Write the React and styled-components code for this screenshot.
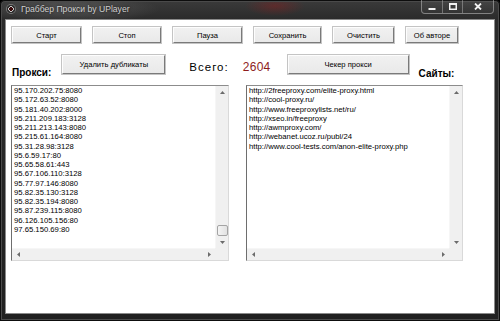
import React from "react";
import styled, { createGlobalStyle } from "styled-components";

const Global = createGlobalStyle`
  html, body { margin: 0; padding: 0; background: #000; }
  body { width: 500px; height: 321px; overflow: hidden; font-family: "Liberation Sans", Arial, sans-serif; }
  #root { width: 500px; height: 321px; }
`;

const Frame = styled.div`
  width: 500px;
  height: 321px;
  box-sizing: border-box;
  display: flex;
  flex-direction: column;
  background:
    radial-gradient(ellipse 90px 14px at 70px 9px, rgba(150,150,150,0.35), transparent),
    radial-gradient(ellipse 30px 10px at 275px 6px, rgba(140,30,30,0.45), transparent),
    linear-gradient(180deg, #3b3b3b 0%, #2b2b2b 6%, #272727 50%, #202020 100%);
  box-shadow: inset 0 0 0 1px #0d0d0d, inset 0 0 0 2px #4a4a4a;
  border-radius: 5px 5px 0 0;
`;

const TitleBar = styled.div`
  height: 20px;
  display: flex;
  align-items: flex-start;
  padding-left: 7px;
  flex-shrink: 0;
`;

const AppIcon = styled.div`
  width: 8px;
  height: 8px;
  margin-top: 5px;
  border-radius: 50%;
  background: radial-gradient(circle at 50% 50%, #3a0a0a 0 30%, #c9c9c9 32% 48%, #2a2a2a 52% 100%);
  box-shadow: 0 0 0 1px #777;
`;

const Title = styled.span`
  margin-left: 6px;
  margin-top: 4px;
  font-size: 8.6px;
  line-height: 11px;
  color: #cfcfcf;
  text-shadow: 0 0 3px rgba(0,0,0,0.8);
  white-space: nowrap;
`;

const CaptionGroup = styled.div`
  margin-left: auto;
  margin-right: 6px;
  height: 14px;
  display: flex;
  box-sizing: border-box;
  border: 1px solid rgba(190,190,190,0.55);
  border-top: none;
  border-radius: 0 0 4px 4px;
  background: linear-gradient(180deg, rgba(255,255,255,0.06), rgba(255,255,255,0.02));
`;

const CaptionBtn = styled.div`
  width: ${p => p.$w}px;
  height: 100%;
  display: flex;
  align-items: center;
  justify-content: center;
  border-left: ${p => (p.$first ? "none" : "1px solid rgba(190,190,190,0.45)")};
  box-sizing: border-box;
`;

const Client = styled.div`
  flex: 1;
  margin: 0 6px 8px 6px;
  background: #fff;
  box-shadow: 0 0 0 1px #8a8a8a;
  padding: 7px 0 0 5px;
  display: flex;
  flex-direction: column;
`;

const Toolbar = styled.div`
  display: flex;
  gap: 12px;
  margin-left: 1px;
  height: 16px;
`;

const Button = styled.div`
  width: ${p => p.$w}px;
  height: ${p => p.$h || 16}px;
  margin-left: ${p => p.$ml || 0}px;
  box-sizing: border-box;
  display: flex;
  align-items: center;
  justify-content: center;
  font-size: 7.6px;
  color: #000;
  white-space: nowrap;
  background: linear-gradient(180deg, #f1f1f1 0%, #e9e9e9 100%);
  border: 1px solid;
  border-color: #fdfdfd #7a7a7a #7a7a7a #fdfdfd;
  box-shadow: 0 0 0 1px #c4c4c4;
`;

const InfoRow = styled.div`
  display: flex;
  align-items: flex-start;
  height: 30px;
  margin-top: 12px;
  margin-left: 1px;
`;

const Label = styled.span`
  margin-top: ${p => p.$top}px;
  margin-left: ${p => p.$left || 0}px;
  font-size: ${p => p.$size || 10}px;
  font-weight: ${p => (p.$bold ? 700 : 400)};
  letter-spacing: ${p => p.$ls || 0}px;
  color: ${p => p.$color || "#000"};
  line-height: 12px;
  white-space: nowrap;
`;

const Lists = styled.div`
  display: flex;
  gap: 17px;
  height: 176px;
`;

const ListBox = styled.div`
  width: ${p => p.$w}px;
  height: 100%;
  box-sizing: border-box;
  display: grid;
  grid-template-columns: 1fr 13px;
  grid-template-rows: 1fr 12px;
  border: 1px solid;
  border-color: #8c8c8c #d9d9d9 #d9d9d9 #6e6e6e;
  background: #fff;
`;

const ListText = styled.div`
  padding: 0 0 0 2px;
  font-size: 7.7px;
  line-height: 9.27px;
  color: #000;
  white-space: pre;
  overflow: hidden;
`;

const VScroll = styled.div`
  background: #f0f0f0;
  display: flex;
  flex-direction: column;
  border-left: 1px solid #f6f6f6;
`;

const HScroll = styled.div`
  background: #f0f0f0;
  display: flex;
  align-items: center;
  border-top: 1px solid #f6f6f6;
`;

const Corner = styled.div`
  background: #f0f0f0;
`;

const ArrowBtn = styled.div`
  width: 12px;
  height: 12px;
  display: flex;
  align-items: center;
  justify-content: center;
  flex-shrink: 0;
`;

const Track = styled.div`
  flex: 1;
  display: flex;
  flex-direction: ${p => (p.$vertical ? "column" : "row")};
  justify-content: flex-end;
  align-items: center;
`;

const Thumb = styled.div`
  width: 11px;
  height: 11px;
  box-sizing: border-box;
  border: 1px solid #a4a4a4;
  border-radius: 2px;
  background: linear-gradient(90deg, #f4f4f4, #e2e2e2);
`;

const Tri = ({ dir }) => {
  const pts = {
    up: "0,3 2.5,0 5,3",
    down: "0,0 2.5,3 5,0",
    left: "3,0 0,2.5 3,5",
    right: "0,0 3,2.5 0,5",
  }[dir];
  const vertical = dir === "up" || dir === "down";
  return (
    <svg width={vertical ? 5 : 3} height={vertical ? 3 : 5} viewBox={vertical ? "0 0 5 3" : "0 0 3 5"}>
      <polygon points={pts} fill="#6b6b6b" />
    </svg>
  );
};

const proxies = [
  "95.170.202.75:8080",
  "95.172.63.52:8080",
  "95.181.40.202:8000",
  "95.211.209.183:3128",
  "95.211.213.143:8080",
  "95.215.61.164:8080",
  "95.31.28.98:3128",
  "95.6.59.17:80",
  "95.65.58.61:443",
  "95.67.106.110:3128",
  "95.77.97.146:8080",
  "95.82.35.130:3128",
  "95.82.35.194:8080",
  "95.87.239.115:8080",
  "96.126.105.156:80",
  "97.65.150.69:80",
];

const sites = [
  "http://2freeproxy.com/elite-proxy.html",
  "http://cool-proxy.ru/",
  "http://www.freeproxylists.net/ru/",
  "http://xseo.in/freeproxy",
  "http://awmproxy.com/",
  "http://webanet.ucoz.ru/publ/24",
  "http://www.cool-tests.com/anon-elite-proxy.php",
];

const List = ({ w, lines, thumb }) => (
  <ListBox $w={w}>
    <ListText>{lines.join("\n")}</ListText>
    <VScroll>
      <ArrowBtn><Tri dir="up" /></ArrowBtn>
      <Track $vertical>{thumb && <Thumb />}</Track>
      <ArrowBtn><Tri dir="down" /></ArrowBtn>
    </VScroll>
    <HScroll>
      <ArrowBtn><Tri dir="left" /></ArrowBtn>
      <Track />
      <ArrowBtn><Tri dir="right" /></ArrowBtn>
    </HScroll>
    <Corner />
  </ListBox>
);

export default function App() {
  return (
    <>
      <Global />
      <Frame>
        <TitleBar>
          <AppIcon />
          <Title>Граббер Прокси by UPlayer</Title>
          <CaptionGroup>
            <CaptionBtn $w={20} $first>
              <svg width="8" height="8" viewBox="0 0 8 8"><rect x="0.5" y="5" width="7" height="2" fill="#f2f2f2" /></svg>
            </CaptionBtn>
            <CaptionBtn $w={20}>
              <svg width="8" height="7" viewBox="0 0 8 7"><rect x="0.75" y="0.75" width="6.5" height="5.5" fill="none" stroke="#f2f2f2" strokeWidth="1.5" /><rect x="0" y="0" width="8" height="2" fill="#f2f2f2" /></svg>
            </CaptionBtn>
            <CaptionBtn $w={31}>
              <svg width="8" height="7" viewBox="0 0 8 7"><path d="M1 0.5 L7 6.5 M7 0.5 L1 6.5" stroke="#f2f2f2" strokeWidth="1.8" /></svg>
            </CaptionBtn>
          </CaptionGroup>
        </TitleBar>
        <Client>
          <Toolbar>
            <Button $w={69}>Старт</Button>
            <Button $w={68}>Стоп</Button>
            <Button $w={69}>Пауза</Button>
            <Button $w={67}>Сохранить</Button>
            <Button $w={61}>Очистить</Button>
            <Button $w={52}>Об авторе</Button>
          </Toolbar>
          <InfoRow>
            <Label $bold $top={12}>Прокси:</Label>
            <Button $w={103} $h={19} $ml={11}>Удалить дубликаты</Button>
            <Label $top={6} $left={24} $size={11.5} $ls={1}>Всего:</Label>
            <Label $top={6} $left={14} $size={12} $ls={0.3} $color="#8e1c1c">2604</Label>
            <Button $w={121} $h={19} $ml={17}>Чекер прокси</Button>
            <Label $bold $top={13} $left={10}>Сайты:</Label>
          </InfoRow>
          <Lists>
            <List w={218} lines={proxies} thumb />
            <List w={217} lines={sites} />
          </Lists>
        </Client>
      </Frame>
    </>
  );
}
